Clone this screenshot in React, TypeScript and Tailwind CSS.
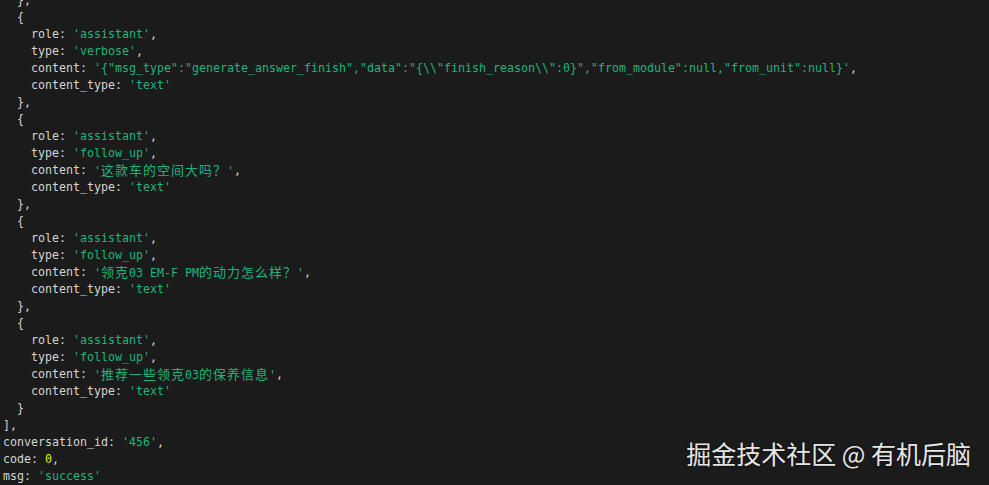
import React from "react";

type Seg = { t: string; c?: "s" | "n" };

const CJK_RE = /[\u3000-\u9fff\uff00-\uffef]/;

function renderText(text: string, key: string) {
  const out: React.ReactNode[] = [];
  let buf = "";
  let isCjk = false;
  let i = 0;
  const flush = () => {
    if (!buf) return;
    if (isCjk) {
      out.push(
        <span
          key={key + "-" + i++}
          className="text-[13px] tracking-[1px] font-['Noto_Sans_CJK_SC','Noto_Sans_CJK_JP',sans-serif] leading-[17px]"
        >
          {buf}
        </span>
      );
    } else {
      out.push(<span key={key + "-" + i++}>{buf}</span>);
    }
    buf = "";
  };
  for (const ch of text) {
    const c = CJK_RE.test(ch);
    if (c !== isCjk) {
      flush();
      isCjk = c;
    }
    buf += ch;
  }
  flush();
  return out;
}

const lines: Seg[][] = [
  [{ t: "  }," }],
  [{ t: "  {" }],
  [{ t: "    role: " }, { t: "'assistant'", c: "s" }, { t: "," }],
  [{ t: "    type: " }, { t: "'verbose'", c: "s" }, { t: "," }],
  [
    { t: "    content: " },
    {
      t: `'{"msg_type":"generate_answer_finish","data":"{\\\\"finish_reason\\\\":0}","from_module":null,"from_unit":null}'`,
      c: "s",
    },
    { t: "," },
  ],
  [{ t: "    content_type: " }, { t: "'text'", c: "s" }],
  [{ t: "  }," }],
  [{ t: "  {" }],
  [{ t: "    role: " }, { t: "'assistant'", c: "s" }, { t: "," }],
  [{ t: "    type: " }, { t: "'follow_up'", c: "s" }, { t: "," }],
  [{ t: "    content: " }, { t: "'这款车的空间大吗？'", c: "s" }, { t: "," }],
  [{ t: "    content_type: " }, { t: "'text'", c: "s" }],
  [{ t: "  }," }],
  [{ t: "  {" }],
  [{ t: "    role: " }, { t: "'assistant'", c: "s" }, { t: "," }],
  [{ t: "    type: " }, { t: "'follow_up'", c: "s" }, { t: "," }],
  [{ t: "    content: " }, { t: "'领克03 EM-F PM的动力怎么样？'", c: "s" }, { t: "," }],
  [{ t: "    content_type: " }, { t: "'text'", c: "s" }],
  [{ t: "  }," }],
  [{ t: "  {" }],
  [{ t: "    role: " }, { t: "'assistant'", c: "s" }, { t: "," }],
  [{ t: "    type: " }, { t: "'follow_up'", c: "s" }, { t: "," }],
  [{ t: "    content: " }, { t: "'推荐一些领克03的保养信息'", c: "s" }, { t: "," }],
  [{ t: "    content_type: " }, { t: "'text'", c: "s" }],
  [{ t: "  }" }],
  [{ t: "]," }],
  [{ t: "conversation_id: " }, { t: "'456'", c: "s" }, { t: "," }],
  [{ t: "code: " }, { t: "0", c: "n" }, { t: "," }],
  [{ t: "msg: " }, { t: "'success'", c: "s" }],
];

export default function App() {
  return (
    <div className="relative w-[989px] h-[485px] overflow-hidden bg-[#1b1b1b]">
      <div className="flex flex-col mt-[-8px] pl-[3px] font-['DejaVu_Sans_Mono',monospace] text-[11.63px] text-[#d4d4d4] whitespace-pre">
        {lines.map((segs, li) => (
          <div key={li} className="h-[17px] leading-[17px] flex items-center">
            {segs.map((s, si) => (
              <span
                key={si}
                className={
                  s.c === "s"
                    ? "text-[#1fb47c]"
                    : s.c === "n"
                    ? "text-[#e5e510]"
                    : ""
                }
              >
                {renderText(s.t, li + "-" + si)}
              </span>
            ))}
          </div>
        ))}
      </div>
      <div className="absolute right-[18px] top-[438px] text-[25px] leading-[30px] text-[#e6e6e6] font-['Noto_Sans_CJK_SC',sans-serif] [text-shadow:0_0_3px_rgba(0,0,0,0.6)] whitespace-pre">
        掘金技术社区 @ 有机后脑
      </div>
    </div>
  );
}
